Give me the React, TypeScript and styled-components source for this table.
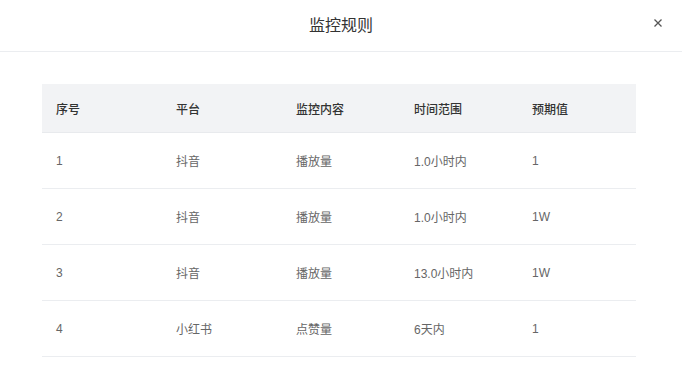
import * as React from 'react'
import styled, { createGlobalStyle } from 'styled-components'

const GlobalStyle = createGlobalStyle`
  html, body {
    margin: 0;
    padding: 0;
    background: #fff;
    font-family: "Liberation Sans", "Noto Sans CJK SC", sans-serif;
  }
`

const rules = [
  { id: '1', platform: '抖音', metric: '播放量', range: '1.0小时内', expect: '1' },
  { id: '2', platform: '抖音', metric: '播放量', range: '1.0小时内', expect: '1W' },
  { id: '3', platform: '抖音', metric: '播放量', range: '13.0小时内', expect: '1W' },
  { id: '4', platform: '小红书', metric: '点赞量', range: '6天内', expect: '1' },
]

const columns = ['序号', '平台', '监控内容', '时间范围', '预期值']
const widths = [120, 120, 118, 118, 118]

export default function App() {
  return (
    <>
      <GlobalStyle />
      <Modal>
        <Header>
          <Title>监控规则</Title>
          <Close aria-label="close">
            <svg width="10" height="10" viewBox="0 0 10 10">
              <path d="M1.5 1.5 L8.5 8.5 M8.5 1.5 L1.5 8.5" stroke="#555" strokeWidth="1.3" />
            </svg>
          </Close>
        </Header>
        <Body>
          <Table>
            <colgroup>
              {widths.map((w, i) => (
                <col key={i} width={w} />
              ))}
            </colgroup>
            <thead>
              <tr>
                {columns.map((c) => (
                  <Th key={c}>{c}</Th>
                ))}
              </tr>
            </thead>
            <tbody>
              {rules.map((r) => (
                <tr key={r.id}>
                  <Td>{r.id}</Td>
                  <Td>{r.platform}</Td>
                  <Td>{r.metric}</Td>
                  <Td>{r.range}</Td>
                  <Td>{r.expect}</Td>
                </tr>
              ))}
            </tbody>
          </Table>
        </Body>
      </Modal>
    </>
  )
}

const Modal = styled.div`
  width: 682px;
  height: 378px;
  background: #fff;
  overflow: hidden;
`

const Header = styled.div`
  position: relative;
  height: 51px;
  border-bottom: 1px solid #ebedf0;
  display: flex;
  align-items: center;
  justify-content: center;
`

const Title = styled.div`
  font-size: 16px;
  color: #333;
  margin-top: -3px;
`

const Close = styled.button`
  position: absolute;
  right: 18px;
  top: 17px;
  width: 12px;
  height: 12px;
  padding: 0;
  border: none;
  background: none;
  display: flex;
  align-items: center;
  justify-content: center;
  cursor: pointer;
`

const Body = styled.div`
  padding: 32px 46px 0 42px;
`

const Table = styled.table`
  width: 594px;
  border-collapse: collapse;
  table-layout: fixed;
  font-size: 12px;
`

const Th = styled.th`
  height: 48px;
  padding: 0 0 0 14px;
  text-align: left;
  background: #f2f3f5;
  color: #333;
  font-weight: 500;
  border-bottom: 1px solid #e8eaed;
`

const Td = styled.td`
  height: 55px;
  padding: 0 0 0 14px;
  color: #666;
  border-bottom: 1px solid #ebedf0;
`
